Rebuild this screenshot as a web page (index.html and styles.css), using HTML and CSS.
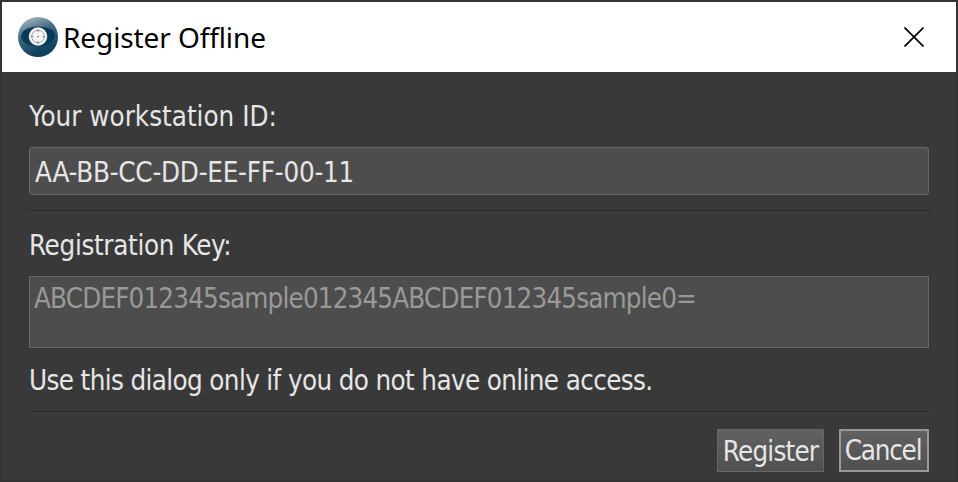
FILE: index.html
```html
<!DOCTYPE html>
<html lang="en">
<head>
  <meta charset="UTF-8" />
  <meta name="viewport" content="width=device-width, initial-scale=1.0"/>
  <title>Register Offline</title>
  <link rel="stylesheet" href="styles.css">
</head>
<body>
  <div class="dialog">
    <header class="titlebar">
      <svg class="logo" width="40" height="40" viewBox="0 0 40 40">
        <defs>
          <linearGradient id="ball" x1="0.2" y1="0" x2="0.55" y2="0.9">
            <stop offset="0" stop-color="#a9b8c2"/>
            <stop offset="0.45" stop-color="#466a80"/>
            <stop offset="1" stop-color="#0c405b"/>
          </linearGradient>
        </defs>
        <circle cx="20" cy="20" r="20" fill="url(#ball)"/>
        <path d="M3 20C3 13 11 9.500 20 9.500C29 9.500 37 13 37 18C36 25 29 29.500 20 29.500C11 29.500 4 26 3 20Z" fill="#073a58"/>
        <circle cx="20" cy="19.500" r="9.200" fill="#f4f5f5"/>
        <circle cx="20" cy="19.500" r="6.300" fill="none" stroke="#999" stroke-width="0.900"/>
        <path d="M20 12v3M20 24v3M12.500 19.500h3M24.500 19.500h3" stroke="#888" stroke-width="0.900"/>
        <circle cx="20" cy="19.500" r="0.800" fill="#777"/>
      </svg>
      <span class="title">Register Offline</span>
      <svg class="close" width="20" height="20" viewBox="0 0 20 20">
        <path d="M0.500 0.500L19.500 19.500M19.500 0.500L0.500 19.500" stroke="#000" stroke-width="1.700"/>
      </svg>
    </header>

    <main class="content">
      <div class="label label-id">Your workstation ID:</div>
      <div class="field field-id"><span>AA-BB-CC-DD-EE-FF-00-11</span></div>
      <div class="line"></div>
      <div class="label label-key">Registration Key:</div>
      <div class="field field-key"><span>ABCDEF012345sample012345ABCDEF012345sample0=</span></div>
      <div class="label hint">Use this dialog only if you do not have online access.</div>
      <div class="line"></div>
      <div class="buttons">
        <button class="btn register">Register</button>
        <button class="btn cancel">Cancel</button>
      </div>
    </main>
  </div>
</body>
</html>
```
FILE: styles.css
```css
* {
  box-sizing: border-box;
}

body {
  margin: 0;
  font-family: Tahoma, 'DejaVu Sans Condensed', sans-serif;
  font-size: 27.5px;
  letter-spacing: -0.8px;
  color: #e6e6e6;
  background: #393939;
  overflow: hidden;
}

.dialog {
  height: 482px;
  border: 2px solid #333333;
}

.titlebar {
  height: 70px;
  padding: 0 32px 0 16px;
  display: flex;
  align-items: center;
  background: #fff;
  color: #000;
}

.title {
  flex: 1;
  margin-left: 5px;
  font-family: 'Segoe UI', 'Noto Sans', sans-serif;
  font-size: 28px;
  letter-spacing: -0.1px;
  white-space: nowrap;
}

.content {
  padding: 24px 27px 0;
}

.label {
  height: 40px;
  line-height: 40px;
  white-space: nowrap;
}

.label-id {
  letter-spacing: 0;
}

.field {
  display: flex;
  border: 1px solid #676767;
  background: #4d4d4d;
  line-height: 40px;
  white-space: nowrap;
}

.field-id {
  height: 48px;
  margin: 11px 0 15px;
  padding: 4px 5px;
  border-radius: 3px;
  letter-spacing: -0.25px;
}

.line {
  height: 1px;
  background: #292929;
}

.label-key {
  margin-top: 15px;
  line-height: 38px;
  letter-spacing: -0.33px;
}

.field-key {
  height: 72px;
  margin: 10px 0 13px;
  padding: 1px 4px;
  color: #999;
  letter-spacing: -0.84px;
}

.hint {
  height: 50px;
  line-height: 38px;
  letter-spacing: -0.63px;
}

.buttons {
  display: flex;
  justify-content: flex-end;
  gap: 15px;
  margin-top: 17px;
}

.btn {
  height: 43px;
  padding: 2px 0 0;
  border: 1px solid #666;
  background: linear-gradient(#616161, #505050);
  color: #e6e6e6;
  font: inherit;
  letter-spacing: inherit;
  line-height: 39px;
}

.register {
  width: 107px;
}

.cancel {
  width: 90px;
  padding: 0 2px 0 0;
  border: 2px solid #999;
  letter-spacing: -1.2px;
}
```
